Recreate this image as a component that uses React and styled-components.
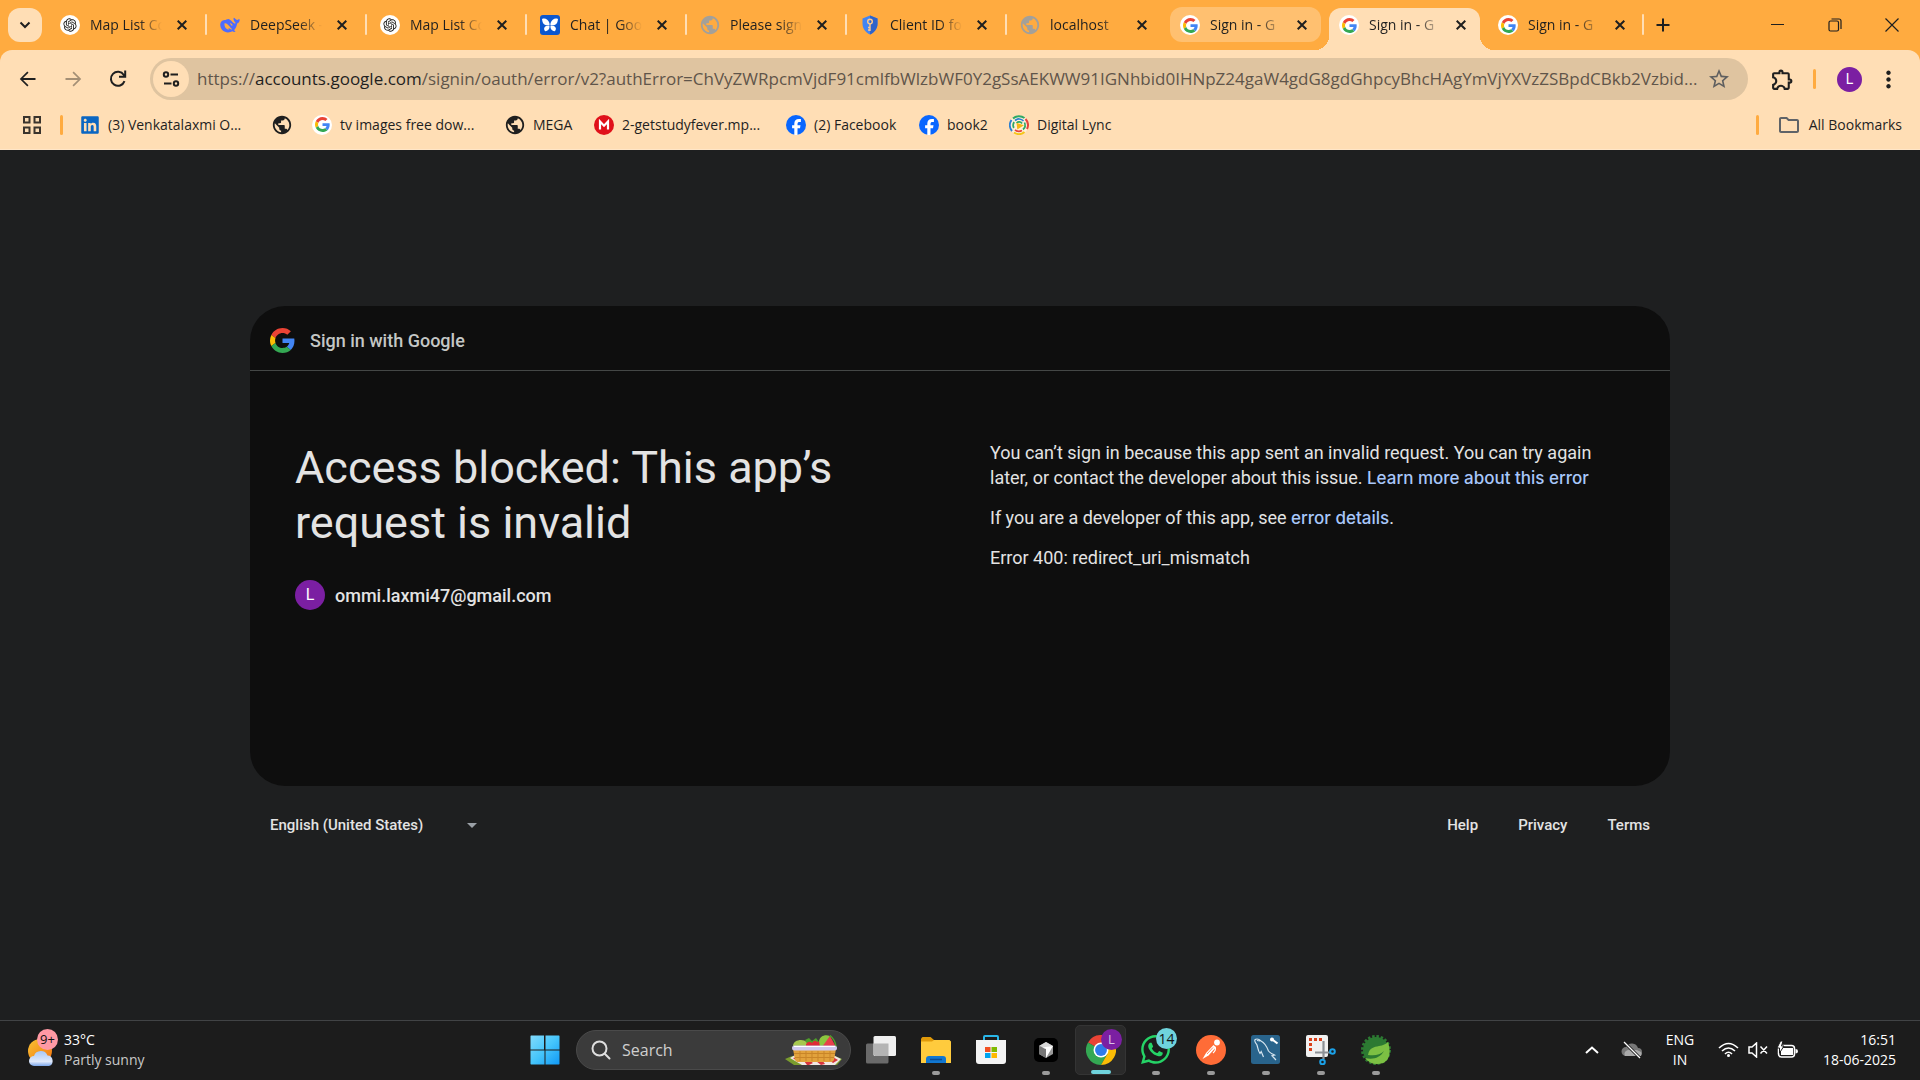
import React from "react";
import styled, { createGlobalStyle, css } from "styled-components";
import { RiOpenaiFill } from "react-icons/ri";
import { FaLinkedin, FaWhatsapp } from "react-icons/fa";
import { MdPublic, MdStarBorder, MdOutlineExtension, MdMoreVert, MdOutlineFolder } from "react-icons/md";

const ui = `"Open Sans", "Noto Sans", sans-serif`;
const page = `Roboto, "Liberation Sans", sans-serif`;

const GlobalStyle = createGlobalStyle`
  *, *::before, *::after { box-sizing: border-box; }
  body { margin: 0; background: #1e1f20; font-family: ${ui}; }
  button { border: 0; padding: 0; background: none; color: inherit; font: inherit; cursor: pointer; }
  a { text-decoration: none; color: inherit; }
  svg { display: block; flex: none; }
`;

const Screen = styled.div`
  display: flex;
  flex-direction: column;
  min-height: 100vh;
`;

/* ---------- browser frame ---------- */

const TabStrip = styled.div`
  display: flex;
  align-items: flex-start;
  height: 50px;
  padding-left: 8px;
  background: #ffab40;
  color: #1f1f1f;
`;

const TabSearch = styled.button`
  display: flex;
  align-items: center;
  justify-content: center;
  width: 34px;
  height: 34px;
  margin: 8px 6px 0 0;
  border-radius: 12px;
  background: #ffdeb5;
`;

const Tabs = styled.div`
  display: flex;
  height: 50px;
`;

const Tab = styled.div`
  position: relative;
  display: flex;
  align-items: center;
  gap: 10px;
  width: ${(p) => (p.$state ? 159 : 160)}px;
  height: 50px;
  padding-left: 12px;
  isolation: isolate;

  ${(p) =>
    p.$separator &&
    css`
      &::after {
        content: "";
        position: absolute;
        right: 1px;
        top: 14px;
        width: 2px;
        height: 21px;
        border-radius: 1px;
        background: #ffdeb5;
      }
    `}

  ${(p) =>
    p.$state === "hover" &&
    css`
      &::before {
        content: "";
        position: absolute;
        z-index: -1;
        inset: 7px 6px 8px 2px;
        border-radius: 12px;
        background: #ffc070;
      }
    `}

  ${(p) =>
    p.$state === "active" &&
    css`
      &::before {
        content: "";
        position: absolute;
        z-index: -1;
        inset: 8px 6px 0 2px;
        border-radius: 12px 12px 0 0;
        background: #ffdeb5;
      }
    `}
`;

const TabFoot = styled.i`
  position: absolute;
  z-index: -1;
  bottom: 0;
  width: 14px;
  height: 14px;
  ${(p) =>
    p.$side === "left"
      ? "left: -12px; background: radial-gradient(circle at 0 0, transparent 14px, #ffdeb5 14px);"
      : "right: -8px; background: radial-gradient(circle at 100% 0, transparent 14px, #ffdeb5 14px);"}
`;

const Favicon = styled.span`
  display: flex;
  align-items: center;
  justify-content: center;
  flex: none;
  width: 20px;
  height: 20px;
  border-radius: ${(p) => (p.$square ? 3 : 10)}px;
  background: ${(p) => p.$bg || "transparent"};
  color: ${(p) => p.$color || "#1f1f1f"};
`;

const TabTitle = styled.span`
  width: 72px;
  overflow: hidden;
  white-space: nowrap;
  font-size: 14px;
  line-height: 22px;
  mask-image: linear-gradient(to right, #000 68%, transparent);
`;

const TabClose = styled.button`
  display: flex;
  align-items: center;
  justify-content: center;
  width: 20px;
  height: 20px;
`;

const NewTab = styled.button`
  display: flex;
  align-items: center;
  justify-content: center;
  width: 34px;
  height: 34px;
  margin: 8px 0 0 1px;
`;

const WindowControls = styled.div`
  display: flex;
  margin-left: auto;
`;

const WindowButton = styled.button`
  display: flex;
  align-items: center;
  justify-content: center;
  width: 57px;
  height: 49px;
`;

const Toolbar = styled.div`
  display: flex;
  align-items: center;
  height: 58px;
  padding: 0 16px 0 5px;
  background: #ffdeb5;
  color: #1f1f1f;
  border-radius: 12px 12px 0 0;
`;

const ToolbarWrap = styled.div`
  background: #ffab40;
`;

const ToolButton = styled.button`
  display: flex;
  align-items: center;
  justify-content: center;
  width: ${(p) => p.$width || 45}px;
  height: 42px;
  color: ${(p) => (p.$dim ? "#a48f75" : "#1f1f1f")};
`;

const Omnibox = styled.div`
  display: flex;
  align-items: center;
  flex: 1;
  min-width: 0;
  height: 42px;
  margin: 0 12px 0 10px;
  padding: 0 17px 0 3px;
  border-radius: 21px;
  background: #dfc4a0;
`;

const SiteInfo = styled.button`
  display: flex;
  align-items: center;
  justify-content: center;
  flex: none;
  width: 36px;
  height: 36px;
  border-radius: 18px;
  background: #ffdeb5;
`;

const Url = styled.div`
  flex: 1;
  min-width: 0;
  margin: 0 6px 0 8px;
  overflow: hidden;
  white-space: nowrap;
  font-size: 17px;
  line-height: 24px;
  color: #5f554a;
  b { font-weight: 400; color: #1f1f1f; }
`;

const Separator = styled.i`
  flex: none;
  width: 3px;
  height: 20px;
  border-radius: 2px;
  background: #ffab40;
`;

const ToolbarEnd = styled.div`
  display: flex;
  align-items: center;
  gap: 8px;
`;

const ProfileButton = styled.button`
  width: 25px;
  height: 25px;
  margin: 0 10px 0 13px;
  border-radius: 50%;
  background: #7b1fa2;
  color: #fff;
  font: 14px/25px ${page};
`;

const BookmarkBar = styled.nav`
  display: flex;
  align-items: center;
  height: 42px;
  padding: 0 18px 8px 22px;
  background: #ffdeb5;
  border-bottom: 1px solid #ffe6c8;
  color: #1f1f1f;
`;

const Bookmark = styled.a`
  display: flex;
  align-items: center;
  gap: 8px;
  flex: none;
  width: ${(p) => (p.$width ? p.$width + "px" : "auto")};
  font-size: 14px;
  line-height: 20px;
  white-space: nowrap;
`;

const BarLead = styled.div`
  display: flex;
  align-items: center;
  gap: 18px;
  margin-right: 17px;
`;

const BarTail = styled.div`
  display: flex;
  align-items: center;
  gap: 18px;
  margin-left: auto;
`;

/* ---------- sign-in page ---------- */

const Page = styled.main`
  display: flex;
  flex: 1;
  flex-direction: column;
  align-items: center;
  justify-content: center;
  background: #1e1f20;
  color: #e3e3e3;
  font-family: ${page};
`;

const Column = styled.div`
  width: 74%;
  max-width: 1420px;
`;

const Card = styled.section`
  min-height: 480px;
  border-radius: 35px;
  background: #0e0e0e;
`;

const CardHeader = styled.header`
  display: flex;
  align-items: center;
  gap: 15px;
  height: 65px;
  padding: 4px 20px 0;
  border-bottom: 1px solid #444746;
  color: #c4c7c5;
  font-size: 18px;
  font-weight: 500;
  line-height: 25px;
`;

const CardBody = styled.div`
  display: grid;
  grid-template-columns: 1fr 1fr;
  gap: 60px;
  padding: 69px 45px;
`;

const Title = styled.h1`
  margin: 0 0 30px;
  font-size: 45px;
  font-weight: 400;
  line-height: 55px;
`;

const Account = styled.div`
  display: flex;
  align-items: center;
  gap: 10px;
  font-size: 18px;
  font-weight: 500;
  line-height: 25px;
`;

const Avatar = styled.span`
  width: 30px;
  height: 30px;
  border-radius: 50%;
  background: #7b1fa2;
  color: #fff;
  font-size: 16px;
  font-weight: 400;
  line-height: 30px;
  text-align: center;
`;

const Message = styled.p`
  margin: 0 0 15px;
  font-size: 18px;
  line-height: 25px;
`;

const MessageLink = styled.a`
  color: #a8c7fa;
  font-family: Inter, ${page};
  font-size: 17px;
  font-weight: 500;
  line-height: 20px;
`;

const PageFooter = styled.footer`
  display: flex;
  align-items: center;
  justify-content: space-between;
  height: 78px;
  padding: 0 20px;
  font-size: 15px;
  font-weight: 500;
`;

const Language = styled.label`
  display: grid;
  grid-template-columns: 207px;
  align-items: center;
  > * { grid-area: 1 / 1; }
  svg { justify-self: end; pointer-events: none; }
`;

const LanguageSelect = styled.select`
  width: 100%;
  height: 40px;
  padding: 0;
  border: 0;
  appearance: none;
  background: transparent;
  color: #e3e3e3;
  font: 500 15px/20px ${page};
`;

const FooterLinks = styled.nav`
  display: flex;
  gap: 40px;
`;

/* ---------- taskbar ---------- */

const Taskbar = styled.footer`
  display: grid;
  grid-template-columns: 1fr auto 1fr;
  align-items: center;
  height: 60px;
  padding-bottom: 2px;
  border-top: 1px solid #414345;
  background: #1c1c1c;
  color: #fff;
  font-size: 14px;
  line-height: 20px;
`;

const Weather = styled.button`
  display: flex;
  align-items: center;
  gap: 6px;
  justify-self: start;
  margin-left: 27px;
  text-align: left;
  small { display: block; font-size: 14px; color: #c8c8c8; }
`;

const WeatherIcon = styled.span`
  position: relative;
  width: 31px;
  height: 42px;
`;

const Badge = styled.b`
  position: absolute;
  top: ${(p) => p.$top}px;
  right: ${(p) => p.$right}px;
  width: 21px;
  height: 21px;
  border-radius: 50%;
  background: ${(p) => p.$bg};
  color: ${(p) => p.$color || "#111"};
  font-size: ${(p) => p.$size || 13}px;
  font-weight: 400;
  line-height: 21px;
  text-align: center;
`;

const Apps = styled.div`
  display: flex;
  align-items: center;
`;

const AppButton = styled.button`
  position: relative;
  display: flex;
  align-items: center;
  justify-content: center;
  width: 55px;
  height: 50px;

  ${(p) =>
    p.$active &&
    css`
      width: 51px;
      margin: 0 2px;
      border: 1px solid #343434;
      border-radius: 5px;
      background: #2a2a2a;
    `}

  ${(p) =>
    p.$running &&
    css`
      &::after {
        content: "";
        position: absolute;
        bottom: 0;
        width: ${p.$active ? 20 : 8}px;
        height: 4px;
        border-radius: 2px;
        background: ${p.$active ? "#6fd3dc" : "#9a9a9a"};
      }
    `}
`;

const SearchBox = styled.label`
  display: flex;
  align-items: center;
  width: 275px;
  height: 40px;
  margin: 0 2px 0 4px;
  padding: 0 7px 0 14px;
  border: 1px solid #4a4a4a;
  border-radius: 20px;
  background: #3b3b3b;
`;

const SearchInput = styled.input`
  flex: 1;
  min-width: 0;
  margin-left: 11px;
  padding: 0;
  border: 0;
  outline: 0;
  background: transparent;
  color: #fff;
  font: 16px/24px ${ui};
  &::placeholder { color: #cfcfcf; opacity: 1; }
`;

const Tray = styled.div`
  display: flex;
  align-items: center;
  justify-self: end;
  margin-right: 24px;
`;

const TrayButton = styled.button`
  display: flex;
  align-items: center;
  justify-content: center;
  gap: 9px;
  min-width: 40px;
  height: 40px;
`;

const TrayText = styled.button`
  width: ${(p) => p.$width}px;
  margin-right: ${(p) => (p.$align === "center" ? 10 : 0)}px;
  text-align: ${(p) => p.$align};
  white-space: nowrap;
`;

/* ---------- drawings ---------- */

const GoogleG = ({ size = 16 }) => (
  <svg width={size} height={size} viewBox="0 0 48 48">
    <path fill="#EA4335" d="M24 9.5c3.54 0 6.71 1.22 9.21 3.6l6.85-6.85C35.9 2.38 30.47 0 24 0 14.62 0 6.51 5.38 2.56 13.22l7.98 6.19C12.43 13.72 17.74 9.5 24 9.5z" />
    <path fill="#4285F4" d="M46.98 24.55c0-1.57-.15-3.09-.38-4.55H24v9.02h12.94c-.58 2.96-2.26 5.48-4.78 7.18l7.73 6c4.51-4.18 7.09-10.36 7.09-17.65z" />
    <path fill="#FBBC05" d="M10.53 28.59c-.48-1.45-.76-2.99-.76-4.59s.27-3.14.76-4.59l-7.98-6.19C.92 16.46 0 20.12 0 24c0 3.88.92 7.54 2.56 10.78l7.97-6.19z" />
    <path fill="#34A853" d="M24 48c6.48 0 11.93-2.13 15.89-5.81l-7.73-6c-2.15 1.45-4.92 2.3-8.16 2.3-6.26 0-11.57-4.22-13.47-9.91l-7.98 6.19C6.51 42.62 14.62 48 24 48z" />
  </svg>
);

const Google = () => <Favicon $bg="#fff"><GoogleG size={15} /></Favicon>;
const OpenAI = () => <Favicon $bg="#fff"><RiOpenaiFill size={16} /></Favicon>;
const Globe = ({ dim }) => <Favicon $color={dim ? "#a3a09a" : "#1f1f1f"}><MdPublic size={22} /></Favicon>;

const DeepSeek = () => (
  <Favicon>
    <svg width="20" height="20" viewBox="0 0 20 20">
      <path fill="#4d6bfe" d="M19.6 4.3c-.9-.4-1.500.5-2.300.7-.8-.1-1.600-.5-2.100-1.200-.4-.5-.5-1-1.200-1.100-.6 0-.5 1.500-.3 2.300.3 1.200 1 2 1.900 2.700-.3 1-.8 1.100-1.600.6C12.500 7.400 11.900 5.900 10.300 5c-.6-.4-1.200-.6-1.300-1.100-2.200.3-3.200 1-4.300 1-3 .1-4.700 2.500-4.400 5.700.3 4 3.900 6.900 7.700 6.800 1.900 0 3-.4 4.200-1.100 1.200.6 2.300.8 3 .5.7-.4-.6-.9-1.100-1.500 1.900-2.300 2.900-4.600 3-6.700 1.500-.3 2.900-2.300 2.500-4.300z" />
      <path fill="#ffab40" d="M4.500 8.300c2.100-.3 3.600 1.300 4.900 3 1 1.400 1.800 2.400 2.900 3-1.800.4-2.300-.9-3.500-1-.6 0-.3 1 .2 1.400-2.800 0-5-3.200-4.500-6.400z" />
      <path fill="#ffab40" d="M9.800 8.400c1.500-.3 2.700.8 2.700 2.200-.5.600-1.200 0-1.500-.6-.3-.6-.7-1-1.200-1.600z" />
    </svg>
  </Favicon>
);

const Butterfly = () => (
  <Favicon $square $bg="#0b57d0">
    <svg width="18" height="18" viewBox="0 0 18 18" fill="#fff">
      <path d="M1 3C4 1.700 7.200 3.400 8.300 6.800c.3 1 .4 1.500.2 2.200-2.300.9-5.400.1-6.500-2C1.500 6 1.200 4.500 1 3zM17 3c-3-1.300-6.200.4-7.300 3.800-.3 1-.4 1.500-.2 2.200 2.300.9 5.400.1 6.500-2 .5-1 .8-2.500 1-4z" />
      <path d="M8.400 9.600c.6 2.700-.9 5.300-4 5.600-1-.8-1.500-2-1.200-3.300.8-1.700 2.900-2.400 5.200-2.300zM9.600 9.600c-.6 2.700.9 5.300 4 5.600 1-.8 1.500-2 1.200-3.300-.8-1.700-2.900-2.400-5.200-2.300z" />
    </svg>
  </Favicon>
);

const Shield = () => (
  <Favicon>
    <svg width="20" height="20" viewBox="0 0 20 20">
      <path fill="#4285f4" d="M10 .5l7.500 3v5.300c0 4.800-3.200 8.800-7.500 10.700-4.300-1.900-7.500-5.900-7.500-10.700V3.500z" />
      <path fill="#2f63c9" d="M10 .5l7.500 3v5.300c0 4.800-3.200 8.800-7.500 10.700z" />
      <g fill="none" stroke="#ffc98a" strokeWidth="1.400">
        <circle cx="10" cy="6.600" r="2.300" />
        <path d="M10 9v7M10 12.500H8M10 15H8" />
      </g>
    </svg>
  </Favicon>
);

const CloseX = () => (
  <svg width="10" height="10" viewBox="0 0 10 10" stroke="#1f1f1f" strokeWidth="2"><path d="M.7.700l8.600 8.600M9.300.700L.7 9.300" /></svg>
);

const Arrow = ({ flip }) => (
  <svg width="24" height="24" viewBox="0 0 24 24" fill="currentColor" transform={flip ? "scale(-1 1)" : undefined}>
    <path d="M19.500 11.100H7.100l5.400-5.400-1.200-1.200L3.800 12l7.500 7.500 1.200-1.200-5.400-5.400h12.400z" />
  </svg>
);

const Reload = () => (
  <svg width="22" height="22" viewBox="0 0 22 22" fill="none" stroke="currentColor" strokeWidth="2">
    <path d="M17.500 13.200A7 7 0 1 1 16.800 7l1.200 1.500M18.200 2.500v6.200H12" />
  </svg>
);

const Tune = () => (
  <svg width="18" height="18" viewBox="0 0 18 18" fill="none" stroke="#1f1f1f" strokeWidth="2">
    <circle cx="4" cy="4.500" r="2.200" /><path d="M8.500 4.500H16M2 13.500h7.500" /><circle cx="14" cy="13.500" r="2.200" />
  </svg>
);

const AppsGrid = () => (
  <svg width="20" height="20" viewBox="0 0 20 20" fill="none" stroke="#3a342d" strokeWidth="2">
    <path d="M2 2h5.500v5.500H2zM12.500 2H18v5.500h-5.500zM2 12.500h5.500V18H2zM12.500 12.500H18V18h-5.500z" />
  </svg>
);

const Mega = () => (
  <Favicon $bg="#e0101a">
    <svg width="12" height="12" viewBox="0 0 12 12" fill="none" stroke="#fff" strokeWidth="2.200"><path d="M2 10.500V2.500l4 4.200 4-4.200v8" /></svg>
  </Favicon>
);

const Facebook = () => (
  <svg width="20" height="20" viewBox="0 0 20 20">
    <circle cx="10" cy="10" r="10" fill="#0866ff" />
    <path fill="#fff" d="M8.300 20v-6.700H6.100v-3.100h2.200V8.800c0-3.300 1.500-4.900 4.700-4.900.6 0 1.400.1 1.900.2v2.800h-1.200c-1.600 0-2.200.6-2.200 2.100v1.200h3l-.5 3.100h-2.500V20z" />
  </svg>
);

const DigitalLync = () => (
  <svg width="20" height="20" viewBox="0 0 20 20" fill="none" strokeWidth="1.700">
    <circle cx="10" cy="10" r="9.500" fill="#fff0d8" />
    <path stroke="#2fa866" strokeWidth="2" d="M4 3.500A9 9 0 0 1 15.500 3" /><path stroke="#e5433d" strokeWidth="2" d="M16.500 4a9 9 0 0 1 1.500 10" />
    <path stroke="#f5c518" strokeWidth="2" d="M15.500 17A9 9 0 0 1 5 17.500" /><path stroke="#2c7fd1" strokeWidth="2" d="M3 16A9 9 0 0 1 2.500 5" />
    <path stroke="#2c7fd1" d="M6 5.500a6 6 0 0 1 8.500.5" /><path stroke="#2fa866" d="M15.500 7.500a6 6 0 0 1-1.500 7" />
    <path stroke="#e5433d" d="M13 15.500a6 6 0 0 1-7-.7" /><path stroke="#2fa866" d="M4.800 13a6 6 0 0 1 .3-6" />
    <path stroke="#2fa866" d="M7.500 8a3.500 3.500 0 0 1 5.500.5" /><path fill="#f5b818" stroke="#f5b818" d="M8.500 9l4.500 1.500-4 2.500z" />
  </svg>
);

const WeatherDrawing = () => (
  <svg width="31" height="38" viewBox="0 0 31 38">
    <defs>
      <linearGradient id="sun" x1="0" y1="0" x2="1" y2="1"><stop offset="0" stopColor="#f9c233" /><stop offset="1" stopColor="#f2720f" /></linearGradient>
      <linearGradient id="cloud" x1="0" y1="0" x2="0" y2="1"><stop offset="0" stopColor="#a9c8f5" /><stop offset=".7" stopColor="#dfe9fb" /><stop offset="1" stopColor="#7ba6ea" /></linearGradient>
    </defs>
    <circle cx="13" cy="22" r="12" fill="url(#sun)" />
    <path fill="url(#cloud)" d="M7 37a5 5 0 0 1 0-10 7.200 7.200 0 0 1 13.500-.5A5.400 5.400 0 0 1 22 37z" />
  </svg>
);

const Windows = () => (
  <svg width="30" height="30" viewBox="0 0 30 30">
    <defs><linearGradient id="win" gradientUnits="userSpaceOnUse" x1="0" y1="0" x2="30" y2="30"><stop stopColor="#84dcfc" /><stop offset=".5" stopColor="#46c5fb" /><stop offset="1" stopColor="#0e97f5" /></linearGradient></defs>
    <path fill="url(#win)" d="M1 .5h13v14H.5V1zM15.500.5h13.500l.5.5v13.500h-14zM.5 15.500h14v14H1l-.5-.5zM15.500 15.500h14V29l-.5.5H15.500z" />
  </svg>
);

const Magnifier = () => (
  <svg width="20" height="20" viewBox="0 0 20 20" fill="none" stroke="#dedede" strokeWidth="2" strokeLinecap="round"><circle cx="8.500" cy="8.500" r="7" /><path d="M13.800 13.800l4.700 4.700" /></svg>
);

const Picnic = () => (
  <svg width="59" height="32" viewBox="0 0 59 32">
    <path fill="#7a9c2e" d="M1 25l7-3h43l7 3-5 6H10z" />
    <path fill="#f0e8e4" d="M6 24l5-3h38l8 4-6 6H18z" />
    <path fill="#d8343c" d="M9 24l5-1 4 3-4 2zM20 27l5-1 4 3-4 2h-2zM32 27l6-1 3 4-4 1zM44 25l5-2 5 3-5 3z" />
    <path fill="#e2a23c" d="M9 15h43l-2 11q-1 2-3 2H14q-2 0-3-2z" />
    <path stroke="#c98528" fill="none" d="M10 19.500h41M11 23.500h39M16 17v10M22 17v10M28 17v10M34 17v10M40 17v10M46 17v10" />
    <path fill="#a6c850" d="M9 12c0-4 4-6 8-6 5 0 7 3 8 7H9z" />
    <path fill="#4f9e2a" d="M21 6l4-2 3 3 4-3 3 4-3 3h-8z" />
    <path fill="#df2b36" d="M22 10q3-4 6-1 3-4 5-1 4-2 6 5H22z" />
    <path fill="#8cc63f" d="M35 7c1-5 6-7 11-5l-6 11h-4z" />
    <path fill="#e8414b" d="M46 2l-8 11h14z" /><path stroke="#4f9e2a" strokeWidth="1.500" fill="none" d="M46 1.500q5 4 6 11" />
    <rect x="8" y="11.500" width="45" height="5" rx="2.500" fill="#cfc8ee" /><path stroke="#fff" d="M10 12.500h41" />
  </svg>
);

const TaskView = () => (
  <svg width="30" height="28" viewBox="0 0 30 28">
    <rect x="0" y="7.500" width="22.500" height="20" rx="1.500" fill="#6a6a6a" /><rect x="7.500" y="0" width="22.500" height="20" rx="1.500" fill="#efefef" /><path fill="#b4b4b4" d="M7.500 7.500h15V20H9l-1.500-1.500z" />
  </svg>
);

const Explorer = () => (
  <svg width="30" height="28" viewBox="0 0 30 28">
    <path fill="#e09a0a" d="M1.500 1h8l3.500 3v6H0V2.500z" /><path fill="#ffcb3d" d="M0 5.500h11L13 4h15.500L30 5.500V27H0z" />
    <path fill="#1177d1" d="M5 27v-4q0-3 3-3h14q3 0 3 3v4z" /><path stroke="#0a4b93" strokeWidth="1.500" d="M9 23.500h12" />
  </svg>
);

const Store = () => (
  <svg width="30" height="30" viewBox="0 0 30 30">
    <path fill="none" stroke="#29b6e8" strokeWidth="2" d="M8 6V2q0-1 1-1h12q1 0 1 1v4" /><path fill="#f4f4f4" d="M0 5h30v21q0 3-3 3H3q-3 0-3-3z" />
    <path fill="#f25022" d="M9 12h5.500v5H9z" /><path fill="#7fba00" d="M15.500 12H21v5h-5.500z" /><path fill="#00a4ef" d="M9 18h5.500v5H9z" /><path fill="#ffb900" d="M15.500 18H21v5h-5.500z" />
  </svg>
);

const Cursor = () => (
  <svg width="24" height="24" viewBox="0 0 24 24">
    <rect width="24" height="24" rx="5" fill="#000" /><path fill="#9a9a9a" d="M12 4l7 4v8l-7 4-7-4V8z" /><path fill="#d9d9d9" d="M5 8l7-4 7 4-7 2z" /><path fill="#777" d="M5 8l7 3v9l-7-4z" /><path fill="#fff" d="M8 9.500L19 8l-7 12v-9z" />
  </svg>
);

const Chrome = () => (
  <svg width="30" height="30" viewBox="0 0 48 48">
    <path fill="#ea4335" d="M24 24L3.200 12A24 24 0 0 1 44.800 12z" /><path fill="#34a853" d="M24 24L3.200 12A24 24 0 0 0 24 48l10.400-18z" /><path fill="#fbbc05" d="M24 24l10.400 6L24 48a24 24 0 0 0 20.800-36H24z" />
    <circle cx="24" cy="24" r="12" fill="#fff" /><circle cx="24" cy="24" r="9.500" fill="#2f7bea" />
  </svg>
);

const Postman = () => (
  <svg width="30" height="30" viewBox="0 0 30 30">
    <circle cx="15" cy="15" r="15" fill="#ff6c37" /><circle cx="21" cy="7.500" r="2.900" fill="#fff" />
    <path fill="#fff" d="M17.500 10l2.500 2.200-7.500 8.300-6 3.500 3.500-6z" /><path stroke="#fff" strokeWidth="1.200" fill="none" d="M19 12q1.500 3-2 6" />
    <path stroke="#ff6c37" strokeWidth=".8" d="M11 19l6-6.500" />
  </svg>
);

const MySql = () => (
  <svg width="29" height="29" viewBox="0 0 29 29">
    <rect width="29" height="29" rx="2.500" fill="#29648c" />
    <path fill="none" stroke="#d5e4ee" strokeWidth="1.200" d="M4 4.500c2-1 4-.5 6 1.500 4 2 6 6 7.500 10 1.500 2 4 3 6 4l-2.500.7 4 4.300M4 4.500C3 7 5 8 6 10c1 3 1 6 3 8.500l1.200-2 2.300 5.500M6 5.500l3 .5" />
    <path stroke="#fff" strokeWidth="2.200" d="M20 3.500l6.500 5" /><circle cx="21" cy="4.500" r="2" fill="#fff" />
  </svg>
);

const Snip = () => (
  <svg width="30" height="30" viewBox="0 0 30 30" fill="none">
    <rect width="22" height="22" rx="2" fill="#f1f1f1" /><path stroke="#d9401a" strokeWidth="3" strokeDasharray="3 2" d="M4.500 16V4.500H17" />
    <path stroke="#8d9196" strokeWidth="2.200" d="M17.500 6v18M9 17.500h15" /><circle cx="16.500" cy="27" r="2.300" stroke="#1ba1e8" strokeWidth="2" /><circle cx="26.500" cy="16.500" r="2.300" stroke="#1ba1e8" strokeWidth="2" />
  </svg>
);

const Spring = () => (
  <svg width="30" height="30" viewBox="0 0 30 30">
    <circle cx="15" cy="15" r="13" fill="#2c7a32" /><circle cx="15" cy="15" r="13.500" fill="none" stroke="#2c7a32" strokeWidth="3" strokeDasharray="2.500 1.740" />
    <path fill="#7cc043" d="M7 20C8 13 13 12 18 11c4-.6 7-2 9-4 3 10 2 18-5 21-7 2.500-14 .5-18-5 8 2 15 0 19-7-4 4-9 5-16 4z" />
  </svg>
);

const CloudOff = () => (
  <svg width="22" height="18" viewBox="0 0 22 18"><path fill="#777" d="M5 15a4.500 4.500 0 0 1 0-9 6.500 6.500 0 0 1 12 1 4 4 0 0 1 0 8z" /><path fill="#aaa" d="M4 15a4 4 0 0 1 6-5q5-2 8 0 4 1 2 5z" /><path stroke="#1c1c1c" strokeWidth="3" d="M4 2l15 15" /><path stroke="#fff" strokeWidth="1.300" d="M3 1l16 16" /></svg>
);

const Wifi = () => (
  <svg width="21" height="16" viewBox="0 0 21 16" fill="none" stroke="#fff" strokeWidth="1.600"><path d="M1 6q9.500-9 19 0M4 9q6.500-6 13 0M7 12q3.500-3.500 7 0" /><circle cx="10.500" cy="13.500" r="1.500" fill="#fff" stroke="none" /></svg>
);

const Muted = () => (
  <svg width="20" height="16" viewBox="0 0 20 16" fill="none" stroke="#fff" strokeWidth="1.500"><path d="M1 5h3l4.500-4v14L4 11H1zM12.500 4.500l6.500 7M19 4.500l-6.500 7" /></svg>
);

const Battery = () => (
  <svg width="21" height="17" viewBox="0 0 21 17"><rect x="1.500" y="4.500" width="16" height="11.500" rx="3" fill="none" stroke="#fff" strokeWidth="1.500" /><path fill="#fff" d="M4 7h12v7H4zM18.500 8q2.500 0 2.500 2.200t-2.500 2.200z" /><path fill="#fff" stroke="#1c1c1c" d="M3.500 0L0 7h2.500v5L7 5H4.500L6 0z" /></svg>
);

/* ---------- data ---------- */

const tabs = [
  { title: "Map List Co", icon: <OpenAI />, separator: true },
  { title: "DeepSeek - ", icon: <DeepSeek />, separator: true },
  { title: "Map List Co", icon: <OpenAI />, separator: true },
  { title: "Chat | Goog", icon: <Butterfly />, separator: true },
  { title: "Please sign", icon: <Globe dim />, separator: true },
  { title: "Client ID fo", icon: <Shield />, separator: true },
  { title: "localhost", icon: <Globe dim /> },
  { title: "Sign in - G", icon: <Google />, state: "hover" },
  { title: "Sign in - G", icon: <Google />, state: "active" },
  { title: "Sign in - G", icon: <Google />, state: "last", separator: true },
];

const bookmarks = [
  { label: "(3) Venkatalaxmi O...", width: 192, icon: <Favicon $color="#0a66c2"><FaLinkedin size={20} /></Favicon> },
  { label: "", width: 40, icon: <Globe /> },
  { label: "tv images free dow...", width: 193, icon: <Google /> },
  { label: "MEGA", width: 89, icon: <Globe /> },
  { label: "2-getstudyfever.mp...", width: 192, icon: <Mega /> },
  { label: "(2) Facebook", width: 133, icon: <Facebook /> },
  { label: "book2", width: 90, icon: <Facebook /> },
  { label: "Digital Lync", width: 110, icon: <DigitalLync /> },
];

export default function App() {
  return (
    <Screen>
      <GlobalStyle />
      <TabStrip>
        <TabSearch aria-label="Search tabs">
          <svg width="12" height="8" viewBox="0 0 12 8" fill="none" stroke="#1f1f1f" strokeWidth="2"><path d="M1.500 1.500L6 6l4.500-4.500" /></svg>
        </TabSearch>
        <Tabs>
          {tabs.map((t, i) => (
            <Tab key={i} $state={t.state} $separator={t.separator}>
              {t.state === "active" && <><TabFoot $side="left" /><TabFoot $side="right" /></>}
              {t.icon}
              <TabTitle>{t.title}</TabTitle>
              <TabClose aria-label="Close tab"><CloseX /></TabClose>
            </Tab>
          ))}
        </Tabs>
        <NewTab aria-label="New tab">
          <svg width="14" height="14" viewBox="0 0 14 14" stroke="#1f1f1f" strokeWidth="2"><path d="M7 .5v13M.5 7h13" /></svg>
        </NewTab>
        <WindowControls>
          <WindowButton aria-label="Minimize"><svg width="13" height="2" viewBox="0 0 13 2"><path fill="#1f1f1f" d="M0 0h13v1H0z" /></svg></WindowButton>
          <WindowButton aria-label="Restore"><svg width="14" height="14" viewBox="0 0 14 14" fill="none" stroke="#1f1f1f" strokeWidth="1.200"><rect x="1" y="3" width="9.500" height="10" rx="1.500" /><path d="M3.500 1H11q2 0 2 2v8" /></svg></WindowButton>
          <WindowButton aria-label="Close"><svg width="14" height="14" viewBox="0 0 14 14" stroke="#1f1f1f" strokeWidth="1.200"><path d="M.5.500l13 13M13.500.500l-13 13" /></svg></WindowButton>
        </WindowControls>
      </TabStrip>
      <ToolbarWrap>
        <Toolbar>
          <ToolButton aria-label="Back"><Arrow /></ToolButton>
          <ToolButton aria-label="Forward" $dim><Arrow flip /></ToolButton>
          <ToolButton aria-label="Reload"><Reload /></ToolButton>
          <Omnibox>
            <SiteInfo aria-label="View site information"><Tune /></SiteInfo>
            <Url role="textbox" aria-label="Address">
              https://<b>accounts.google.com</b>/signin/oauth/error/v2?authError=ChVyZWRpcmVjdF91cmlfbWlzbWF0Y2gSsAEKWW91IGNhbid0IHNpZ24gaW4gdG8gdGhpcyBhcHAgYmVjYXVzZSBpdCBkb2Vzbid...
            </Url>
            <MdStarBorder size={24} color="#5f5f5f" />
          </Omnibox>
          <ToolbarEnd>
            <ToolButton aria-label="Extensions"><MdOutlineExtension size={25} /></ToolButton>
            <Separator />
            <ProfileButton aria-label="Profile">L</ProfileButton>
          </ToolbarEnd>
          <ToolButton aria-label="More" $width={32}><MdMoreVert size={27} /></ToolButton>
        </Toolbar>
      </ToolbarWrap>
      <BookmarkBar aria-label="Bookmarks">
        <BarLead><AppsGrid /><Separator /></BarLead>
        {bookmarks.map((b, i) => (
          <Bookmark href="#" key={i} $width={b.width} aria-label={b.label || "Bookmark"}>{b.icon}{b.label && <span>{b.label}</span>}</Bookmark>
        ))}
        <BarTail>
          <Separator />
          <Bookmark href="#"><MdOutlineFolder size={24} color="#5f6368" /><span>All Bookmarks</span></Bookmark>
        </BarTail>
      </BookmarkBar>

      <Page>
        <Column>
          <Card>
            <CardHeader><GoogleG size={25} /><span>Sign in with Google</span></CardHeader>
            <CardBody>
              <div>
                <Title>Access blocked: This app’s request is invalid</Title>
                <Account><Avatar>L</Avatar><span>ommi.laxmi47@gmail.com</span></Account>
              </div>
              <div>
                <Message>You can’t sign in because this app sent an invalid request. You can try again later, or contact the developer about this issue. <MessageLink href="#">Learn more about this error</MessageLink></Message>
                <Message>If you are a developer of this app, see <MessageLink href="#">error details</MessageLink>.</Message>
                <Message>Error 400: redirect_uri_mismatch</Message>
              </div>
            </CardBody>
          </Card>
          <PageFooter>
            <Language>
              <LanguageSelect aria-label="Language" defaultValue="en-US"><option value="en-US">English (United States)</option></LanguageSelect>
              <svg width="10" height="5" viewBox="0 0 10 5"><path fill="#9aa0a6" d="M0 0h10L5 5z" /></svg>
            </Language>
            <FooterLinks><a href="#">Help</a><a href="#">Privacy</a><a href="#">Terms</a></FooterLinks>
          </PageFooter>
        </Column>
      </Page>

      <Taskbar>
        <Weather>
          <WeatherIcon><WeatherDrawing /><Badge $bg="#ff99a4" $top={0} $right={0}>9+</Badge></WeatherIcon>
          <span>33°C<small>Partly sunny</small></span>
        </Weather>
        <Apps>
          <AppButton aria-label="Start"><Windows /></AppButton>
          <SearchBox><Magnifier /><SearchInput placeholder="Search" aria-label="Search" /><Picnic /></SearchBox>
          <AppButton aria-label="Task view"><TaskView /></AppButton>
          <AppButton aria-label="File Explorer" $running><Explorer /></AppButton>
          <AppButton aria-label="Store"><Store /></AppButton>
          <AppButton aria-label="Cursor" $running><Cursor /></AppButton>
          <AppButton aria-label="Chrome" $running $active><Chrome /><Badge $bg="#7b1fa2" $color="#d9c2e6" $top={3} $right={3}>L</Badge></AppButton>
          <AppButton aria-label="WhatsApp" $running><FaWhatsapp size={33} color="#25d366" /><Badge $bg="#6fd3dc" $top={3} $right={6} $size={14}>14</Badge></AppButton>
          <AppButton aria-label="Postman" $running><Postman /></AppButton>
          <AppButton aria-label="MySQL Workbench" $running><MySql /></AppButton>
          <AppButton aria-label="Snipping Tool" $running><Snip /></AppButton>
          <AppButton aria-label="Spring Tools" $running><Spring /></AppButton>
        </Apps>
        <Tray>
          <TrayButton aria-label="Show hidden icons"><svg width="14" height="8" viewBox="0 0 14 8" fill="none" stroke="#fff" strokeWidth="2"><path d="M1 7l6-5.500L13 7" /></svg></TrayButton>
          <TrayButton aria-label="OneDrive"><CloudOff /></TrayButton>
          <TrayText $width={56} $align="center">ENG<br />IN</TrayText>
          <TrayButton aria-label="Network, volume and battery"><Wifi /><Muted /><Battery /></TrayButton>
          <TrayText $width={98} $align="right">16:51<br />18-06-2025</TrayText>
        </Tray>
      </Taskbar>
    </Screen>
  );
}
